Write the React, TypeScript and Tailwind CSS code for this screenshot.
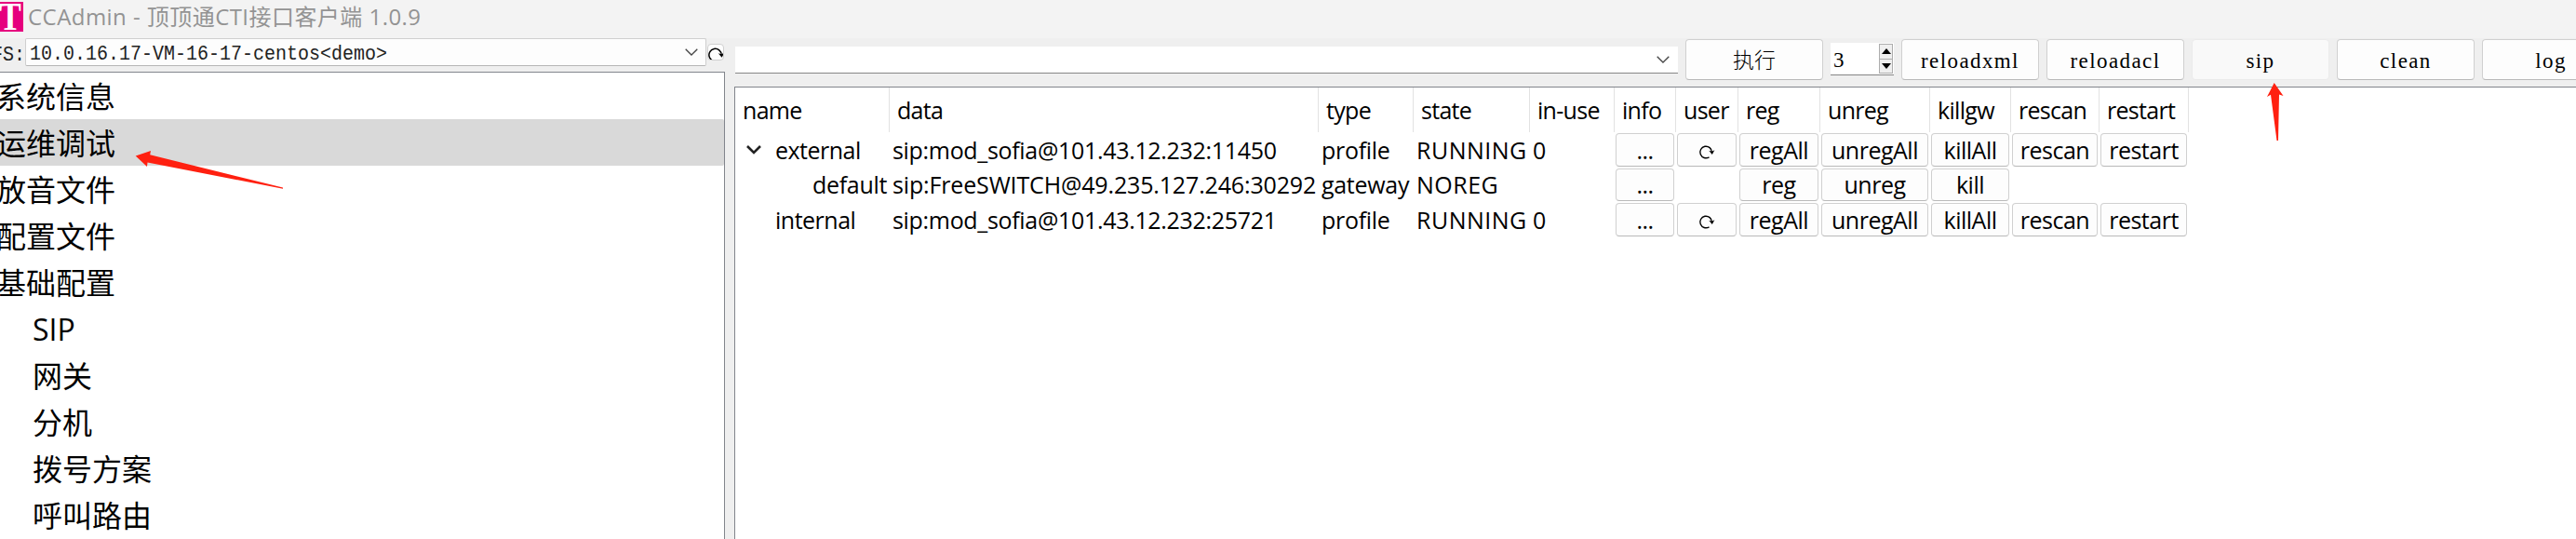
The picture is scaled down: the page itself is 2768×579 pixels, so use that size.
import { Fragment, ReactNode } from "react";
import clsx from "clsx";

const menu = [
    { label: "系统信息" },
    { label: "运维调试", active: true },
    { label: "放音文件" },
    { label: "配置文件" },
    { label: "基础配置" },
    { label: "SIP", child: true },
    { label: "网关", child: true },
    { label: "分机", child: true },
    { label: "拨号方案", child: true },
    { label: "呼叫路由", child: true },
];

const columns = ["name", "data", "type", "state", "in-use", "info", "user", "reg", "unreg", "killgw", "rescan", "restart"];

const rows = [
    {
        name: "external", data: "sip:mod_sofia@101.43.12.232:11450", type: "profile", state: "RUNNING", inUse: "0",
        actions: ["...", "refresh", "regAll", "unregAll", "killAll", "rescan", "restart"], open: true,
    },
    {
        name: "default", data: "sip:FreeSWITCH@49.235.127.246:30292", type: "gateway", state: "NOREG", inUse: "",
        actions: ["...", "", "reg", "unreg", "kill", "", ""], child: true,
    },
    {
        name: "internal", data: "sip:mod_sofia@101.43.12.232:25721", type: "profile", state: "RUNNING", inUse: "0",
        actions: ["...", "refresh", "regAll", "unregAll", "killAll", "rescan", "restart"],
    },
];

const RefreshIcon = ({ className }: { className?: string }) => (
    <svg viewBox="0 0 18 18" className={className} fill="none" stroke="#000" strokeWidth="1.4">
        <path d="M11.500 14.800A6.300 6.300 0 1 1 14.400 9.500" />
        <path d="M11.200 7.800l3.200.9 3-1.400-2.600 4.700z" fill="#000" stroke="none" />
    </svg>
)

const Chevron = () => (
    <svg viewBox="0 0 14 8" className="h-2 w-3.5 shrink-0" fill="none" stroke="#444" strokeWidth="1.3">
        <path d="M.7.7 7 7l6.3-6.3" />
    </svg>
)

const ToolButton = ({ children, hover }: { children: ReactNode, hover?: boolean }) => (
    <button
        className={clsx(
            "flex h-11 w-[148px] shrink-0 items-center justify-center rounded border pt-1 font-['Liberation_Serif','Noto_Sans_CJK_SC',serif] text-[23px] tracking-[1.4px] text-black",
            hover ? "border-[#ebebeb] bg-[#f9f9f9]" : "border-[#d0d0d0] border-b-[#b9b9b9] bg-[#fdfdfd]"
        )}>
        {children}
    </button>
)

const Sidebar = () => {
    return <aside className="flex w-[779px] shrink-0 flex-col">
        <div className="flex h-9 shrink-0 items-start">
            <div className="-ml-[9px] w-9 shrink-0 scale-y-110 whitespace-pre pt-[1px] font-['Liberation_Mono',monospace] text-xl leading-[34px] text-[#222]">FS:</div>
            <div className="flex h-[30px] w-[732px] items-center justify-between rounded-xs border border-[#cfcfcf] border-b-[#b5b5b5] bg-[#fdfdfd] pr-2 pl-1">
                <span className="scale-y-110 pt-1 font-['Liberation_Mono',monospace] text-xl leading-6 text-[#222]">10.0.16.17-VM-16-17-centos&lt;demo&gt;</span>
                <Chevron />
            </div>
            <div className="mt-1.5 ml-[1px] h-[18px] w-[18px] overflow-hidden rounded border border-[#d0d0d0] bg-[#fdfdfd]">
                <RefreshIcon className="mt-[1px] -ml-[1px] h-[19px] w-[19px]" />
            </div>
        </div>
        <ul className="flex-1 overflow-hidden border-t border-r border-[#82858c] bg-white">
            {menu.map((item) => (
                <li
                    key={item.label}
                    className={clsx(
                        "flex h-[50px] items-center pt-0.5 text-[32px] leading-none",
                        item.active && "rounded-r-xs bg-[#d9d9d9]",
                        item.child ? "pl-[35px]" : "-ml-1"
                    )}>
                    {item.label}
                </li>
            ))}
        </ul>
    </aside>
}

const Toolbar = () => {
    return <div className="flex h-[52px] shrink-0 items-start">
        <div className="mt-[9px] ml-[1px] flex h-[29px] w-[1013px] shrink-0 items-center justify-end border-b border-[#868686] bg-white pr-[9px]">
            <Chevron />
        </div>
        <div className="ml-2 flex items-start gap-2 pt-[1px]">
            <ToolButton><span className="font-light tracking-normal">执行</span></ToolButton>
            <div className="mt-1 flex h-[35px] w-[68px] items-center justify-between border-b border-[#868686] bg-white">
                <span className="pt-1 pl-[3px] font-['Liberation_Serif',serif] text-[23px] leading-7">3</span>
                <div className="mr-[1px] flex h-8 w-[15px] flex-col border border-[#adadad] bg-[#efefef]">
                    <div className="flex flex-1 items-center justify-center border-b border-[#adadad]">
                        <svg viewBox="0 0 10 6" className="h-1.5 w-2.5"><path d="M5 0l5 6H0z" /></svg>
                    </div>
                    <div className="flex flex-1 items-center justify-center">
                        <svg viewBox="0 0 10 6" className="h-1.5 w-2.5"><path d="M5 6l5-6H0z" /></svg>
                    </div>
                </div>
            </div>
            <ToolButton>reloadxml</ToolButton>
            <ToolButton>reloadacl</ToolButton>
            <ToolButton hover>sip</ToolButton>
            <ToolButton>clean</ToolButton>
            <ToolButton>log</ToolButton>
        </div>
    </div>
}

const ProfileTable = () => {
    return <div className="flex-1 border-t border-l border-[#82858c] bg-white">
        <div className="grid w-[1562px] grid-cols-[166px_461px_102px_125px_91px_66px_67px_88px_118px_87px_95px_96px] text-[25px] leading-8 tracking-[-0.5px] whitespace-nowrap text-black">
            {columns.map((col) => (
                <div key={col} className="h-12 border-r border-[#e2e2e2] pt-2 pl-2 tracking-[-0.7px]">{col}</div>
            ))}
            {rows.map((row) => (
                <Fragment key={row.name}>
                    <div className={clsx("flex h-[37.5px] items-center", row.child ? "pl-[83px] tracking-[-0.3px]" : row.open ? "pl-3" : "pl-[43px]")}>
                        {row.open && (
                            <svg viewBox="0 0 16 10" className="mr-[15px] h-2.5 w-4 shrink-0" fill="none" stroke="#222" strokeWidth="2.6">
                                <path d="M1 1l7 7 7-7" />
                            </svg>
                        )}
                        {row.name}
                    </div>
                    <div className={clsx("flex items-center pl-[3px]", row.child ? "tracking-[-0.15px]" : "tracking-[-0.32px]")}>{row.data}</div>
                    <div className="flex items-center pl-[3px] tracking-[-0.3px]">{row.type}</div>
                    <div className="flex items-center pl-[3px] tracking-[0.5px]">{row.state}</div>
                    <div className="flex items-center pl-[3px]">{row.inUse}</div>
                    {row.actions.map((action, i) => (
                        <div key={i} className="flex py-[1px] pr-0.5 pl-[1px]">
                            {action && (
                                <button className="flex w-full items-center justify-center rounded border border-[#d0d0d0] border-b-[#b9b9b9] bg-[#fdfdfd]">
                                    {action === "refresh" ? <RefreshIcon className="mt-1 h-[18px] w-[18px]" /> : action}
                                </button>
                            )}
                        </div>
                    ))}
                </Fragment>
            ))}
        </div>
    </div>
}

const App = () => {
    return <div className="relative flex h-[579px] w-[2768px] flex-col overflow-hidden bg-[#efefef] font-['Open_Sans','Noto_Sans_CJK_SC',sans-serif] text-black">
        <header className="flex h-[41px] shrink-0 items-start bg-[#f3f3f3]">
            <div className="mt-0.5 flex h-8 w-[25px] items-center bg-[#e6007e]">
                <span className="-ml-[3px] origin-center scale-x-[0.84] font-['Liberation_Serif',serif] text-[42px] leading-8 font-bold text-white">T</span>
            </div>
            <h1 className="pl-[5px] text-[24px] leading-[35px] tracking-[0.45px] whitespace-nowrap text-[#939393]">CCAdmin - 顶顶通CTI接口客户端 1.0.9</h1>
        </header>
        <div className="flex min-h-0 flex-1">
            <Sidebar />
            <main className="ml-2.5 flex min-w-0 flex-1 flex-col overflow-hidden">
                <Toolbar />
                <ProfileTable />
            </main>
        </div>

        {/* pointer arrows */}
        <svg viewBox="0 0 160 44" className="absolute top-[161px] left-[145px] h-11 w-40">
            <path d="M.7 6.5 17 1l-.8 4.200L159 40.600v1.200L13.500 13.500l-.5 4.500z" fill="#ff2010" />
        </svg>
        <svg viewBox="0 0 20 64" className="absolute top-[88px] left-[2435px] h-16 w-5">
            <path d="M8.700 1 18.500 15l-4.500-1.500L13 63h-1.500L5 13.700 1 16z" fill="#ff2010" />
        </svg>
    </div>
}

export default App;
